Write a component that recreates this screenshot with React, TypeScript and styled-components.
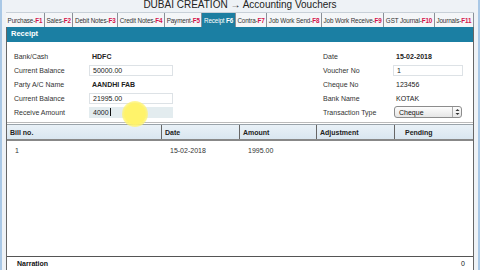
import styled, { createGlobalStyle } from 'styled-components';

const tabs = [
  { label: 'Purchase-', key: 'F1' },
  { label: 'Sales-', key: 'F2' },
  { label: 'Debit Notes-', key: 'F3' },
  { label: 'Credit Notes-', key: 'F4' },
  { label: 'Payment-', key: 'F5' },
  { label: 'Receipt\u00a0', key: 'F6', active: true },
  { label: 'Contra-', key: 'F7' },
  { label: 'Job Work Send-', key: 'F8' },
  { label: 'Job Work Receive-', key: 'F9' },
  { label: 'GST Journal-', key: 'F10' },
  { label: 'Journals-', key: 'F11' },
];

const columns = [
  { title: 'Bill no.', width: 155 },
  { title: 'Date', width: 78 },
  { title: 'Amount', width: 77 },
  { title: 'Adjustment', width: 78 },
  { title: 'Pending', width: 77 },
];

const rows = [['1', '15-02-2018', '1995.00', '', '']];

const GlobalStyle = createGlobalStyle`
  html, body {
    margin: 0;
    padding: 0;
    background: #eef2f6;
    font-family: "Liberation Sans", Arial, sans-serif;
  }
`;

const App = () => {
  return (
    <Page>
      <GlobalStyle />
      <Title>DUBAI CREATION → Accounting Vouchers</Title>
      <TabBar>
        {tabs.map(t => (
          <Tab key={t.key} $active={!!t.active}>
            {t.label}
            <TabKey $active={!!t.active}>{t.key}</TabKey>
          </Tab>
        ))}
      </TabBar>
      <Panel>
        <PanelHeader>Receipt</PanelHeader>
        <Form>
          <FormCol>
            <FormRow>
              <Label>Bank/Cash</Label>
              <Value $bold>HDFC</Value>
            </FormRow>
            <FormRow>
              <Label>Current Balance</Label>
              <Input>50000.00</Input>
            </FormRow>
            <FormRow>
              <Label>Party A/C Name</Label>
              <Value $bold>AANDHI FAB</Value>
            </FormRow>
            <FormRow>
              <Label>Current Balance</Label>
              <Input>21995.00</Input>
            </FormRow>
            <FormRow>
              <Label>Receive Amount</Label>
              <Input $focused>
                4000<Caret />
              </Input>
            </FormRow>
          </FormCol>
          <FormCol>
            <FormRow>
              <Label $width={72}>Date</Label>
              <Value $bold>15-02-2018</Value>
            </FormRow>
            <FormRow>
              <Label $width={72}>Voucher No</Label>
              <Input $width={70}>1</Input>
            </FormRow>
            <FormRow>
              <Label $width={72}>Cheque No</Label>
              <Value>123456</Value>
            </FormRow>
            <FormRow>
              <Label $width={72}>Bank Name</Label>
              <Value>KOTAK</Value>
            </FormRow>
            <FormRow>
              <Label $width={72}>Transaction Type</Label>
              <Select>
                <span>Cheque</span>
                <SelectArrows>
                  <svg width="5" height="8" viewBox="0 0 5 8">
                    <path d="M0.5 3 L2.5 1 L4.5 3 Z M0.5 5 L2.5 7 L4.5 5 Z" fill="#333" />
                  </svg>
                </SelectArrows>
              </Select>
            </FormRow>
          </FormCol>
          <Cursor />
        </Form>
        <Table>
          <HeadRow>
            {columns.map(c => (
              <HeadCell key={c.title} style={{ width: c.width }}>
                {c.title}
              </HeadCell>
            ))}
          </HeadRow>
          <Body>
            {rows.map((r, i) => (
              <BodyRow key={i}>
                {r.map((v, j) => (
                  <BodyCell key={j} style={{ width: columns[j].width }}>
                    {v}
                  </BodyCell>
                ))}
              </BodyRow>
            ))}
          </Body>
        </Table>
        <Footer>
          <span>Narration</span>
          <FooterCount>0</FooterCount>
        </Footer>
      </Panel>
    </Page>
  );
};

export default App;

const Page = styled.div`
  width: 480px;
  height: 270px;
  box-sizing: border-box;
  overflow: hidden;
  display: flex;
  flex-direction: column;
  padding: 0 4px 0 4px;
  border-left: 2px solid #a9c8e6;
  border-right: 2px solid #a9c8e6;
  background: #eef2f6;
`;

const Title = styled.div`
  height: 12px;
  line-height: 12px;
  text-align: center;
  font-size: 10px;
  color: #222;
  margin-top: -1px;
`;

const TabBar = styled.div`
  display: flex;
  height: 14px;
  min-width: 0;
  overflow: hidden;
  align-items: stretch;
  margin-top: 1px;
  border-top: 1px solid #c8d0d8;
`;

const Tab = styled.div<{ $active: boolean }>`
  display: flex;
  align-items: center;
  padding: 0 1.6px;
  font-size: 6.3px;
  letter-spacing: -0.12px;
  white-space: nowrap;
  color: ${({ $active }) => ($active ? '#fff' : '#333')};
  background: ${({ $active }) => ($active ? '#1d7ea1' : '#f4f6f8')};
  border-right: 1px solid #8a9098;
`;

const TabKey = styled.span<{ $active: boolean }>`
  color: ${({ $active }) => ($active ? '#fff' : '#d4124a')};
  font-weight: bold;
`;

const Panel = styled.div`
  flex: 1;
  display: flex;
  flex-direction: column;
  min-width: 0;
  min-height: 0;
  overflow: hidden;
  background: #fff;
  border-left: 1px solid #666;
  border-right: 1px solid #666;
`;

const PanelHeader = styled.div`
  height: 15px;
  line-height: 14px;
  background: #1b7fa3;
  color: #fff;
  font-weight: bold;
  font-size: 7.5px;
  padding-left: 4px;
`;

const Form = styled.div`
  position: relative;
  display: grid;
  grid-template-columns: 309px 1fr;
  padding: 7px 0 3px 7px;
  border-bottom: 1px solid #bbb;
`;

const FormCol = styled.div`
  display: flex;
  flex-direction: column;
  min-width: 0;
`;

const FormRow = styled.div`
  display: flex;
  align-items: center;
  height: 14px;
`;

const Label = styled.div<{ $width?: number }>`
  width: ${({ $width }) => $width ?? 77}px;
  font-size: 7px;
  color: #333;
  flex-shrink: 0;
  white-space: nowrap;
`;

const Value = styled.div<{ $bold?: boolean }>`
  font-size: 7px;
  color: #222;
  font-weight: ${({ $bold }) => ($bold ? 'bold' : 'normal')};
  padding-left: 1px;
`;

const Input = styled.div<{ $focused?: boolean; $width?: number }>`
  display: flex;
  align-items: center;
  box-sizing: border-box;
  width: ${({ $width }) => $width ?? 84}px;
  height: 11px;
  margin-left: -2px;
  padding-left: 3px;
  font-size: 7px;
  color: #222;
  background: ${({ $focused }) => ($focused ? '#e3ecef' : '#fff')};
  border: 1px solid ${({ $focused }) => ($focused ? '#e3ecef' : '#dde2e6')};
`;

const Caret = styled.span`
  display: inline-block;
  width: 1px;
  height: 8px;
  background: #111;
  margin-left: 1px;
`;

const Select = styled.div`
  display: flex;
  align-items: center;
  justify-content: space-between;
  box-sizing: border-box;
  width: 68px;
  height: 12px;
  margin-left: -1px;
  padding-left: 4px;
  border: 1px solid #8c8c8c;
  border-radius: 3px;
  font-size: 7px;
  color: #111;
  background: linear-gradient(#fdfdfd, #e6e6e6);
`;

const SelectArrows = styled.div`
  display: flex;
  align-items: center;
  justify-content: center;
  width: 8px;
  height: 100%;
  border-left: 1px solid #aaa;
`;

const Cursor = styled.div`
  position: absolute;
  left: 115px;
  top: 59px;
  width: 26px;
  height: 26px;
  border-radius: 50%;
  background: radial-gradient(circle, #fff36a 55%, rgba(255, 245, 120, 0.6) 75%, rgba(255, 245, 120, 0) 100%);
`;

const Table = styled.div`
  flex: 1;
  display: flex;
  flex-direction: column;
  margin-top: 1px;
`;

const HeadRow = styled.div`
  display: flex;
  height: 17px;
  background: linear-gradient(#e9f1f7, #d9e6f0);
  border-top: 1px solid #9aa3aa;
  border-bottom: 2px solid #888;
  box-sizing: border-box;
`;

const HeadCell = styled.div`
  display: flex;
  align-items: center;
  box-sizing: border-box;
  flex-shrink: 0;
  padding-left: 3px;
  font-size: 7px;
  font-weight: bold;
  color: #222;
  border-right: 1px solid #666;
  &:last-child {
    flex: 1;
    border-right: none;
    padding-left: 10px;
  }
`;

const Body = styled.div`
  flex: 1;
  padding-top: 2px;
`;

const BodyRow = styled.div`
  display: flex;
  height: 14px;
  align-items: center;
`;

const BodyCell = styled.div`
  box-sizing: border-box;
  flex-shrink: 0;
  padding-left: 8px;
  font-size: 7px;
  color: #333;
`;

const Footer = styled.div`
  display: flex;
  justify-content: space-between;
  align-items: center;
  height: 13px;
  padding: 0 8px 0 10px;
  border-top: 1px solid #555;
  font-size: 7px;
  font-weight: bold;
  color: #111;
  background: #fff;
`;

const FooterCount = styled.span`
  font-weight: normal;
`;
